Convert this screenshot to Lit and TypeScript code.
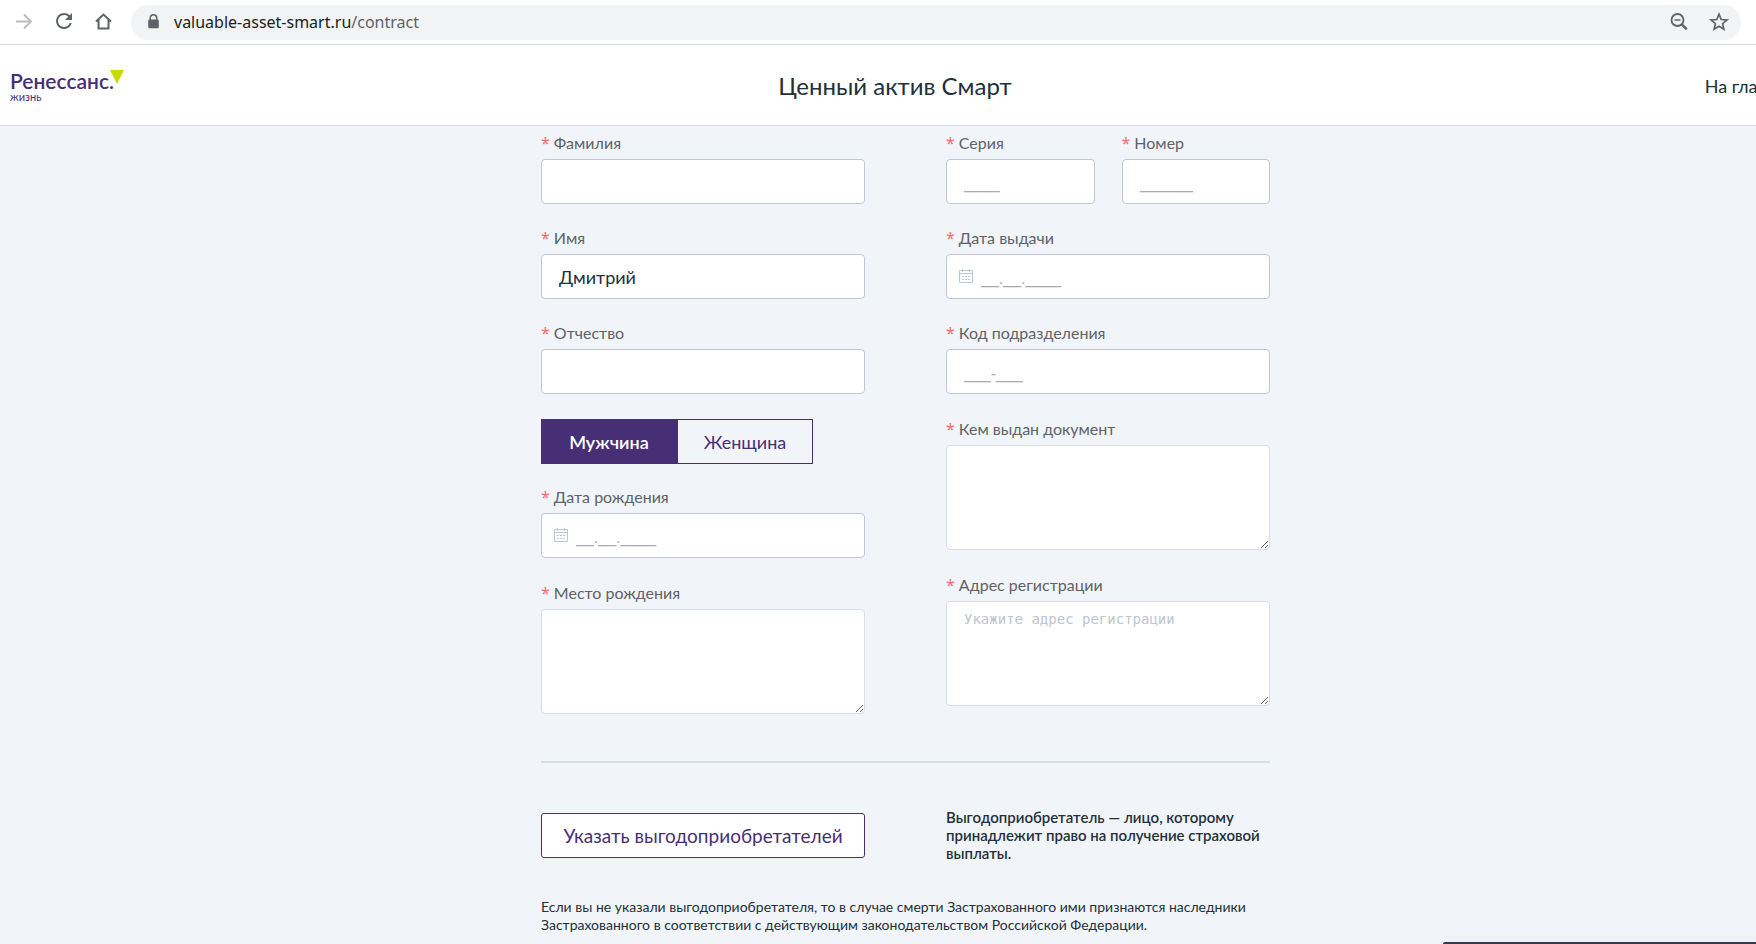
import { LitElement, html, css, svg, nothing } from "lit";
import { customElement, property, state } from "lit/decorators.js";
import { classMap } from "lit/directives/class-map.js";

const calendarIcon = svg`<g fill="none" stroke="#b9c9ce">
  <path d="M.5 1.500h13v12H.5zM.5 4.500h13M3.500 0v3M10.500 0v3"/>
  <path d="M3 7.500h8M3 10.500h8" stroke-dasharray="2 1"/></g>`;

@customElement("browser-bar")
export class BrowserBar extends LitElement {
  static styles = css`
    :host {
      display: flex;
      align-items: center;
      height: 44px;
      padding: 0 15px 0 12px;
      border-bottom: 1px solid #d9dce0;
      background: #fff;
      color: #5f6368;
      font-family: "Noto Sans", "Open Sans", sans-serif;
    }
    svg { display: block; }
    button {
      display: block;
      padding: 0;
      border: 0;
      background: none;
      color: inherit;
    }
    .tools { display: flex; gap: 16px; margin-right: 15px; }
    .off { color: #b9bbbe; }
    .address {
      flex: 1;
      display: flex;
      align-items: center;
      height: 35px;
      padding: 0 10px 0 11px;
      border-radius: 18px;
      background: #f1f3f4;
    }
    .url { flex: 1; margin-left: 8px; font-size: 16px; line-height: 24px; }
    .host { color: #202124; }
    .actions { display: flex; gap: 16px; }
  `;

  render() {
    return html`
      <div class="tools">
        <button class="off" aria-label="Вперёд" disabled>
          <svg width="24" height="24" viewBox="0 0 24 24" fill="none" stroke="currentColor" stroke-width="1.800"><path d="M4 11.500h15M12 4.500l7 7-7 7"/></svg>
        </button>
        <button aria-label="Обновить">
          <svg width="24" height="24" viewBox="0 0 24 24" fill="currentColor"><path d="M17.650 5.350A7.960 7.960 0 0 0 12 3a8 8 0 1 0 7.730 10h-2.080A6 6 0 1 1 12 5c1.660 0 3.140.690 4.220 1.780L13 10h7V3z"/></svg>
        </button>
        <button aria-label="Главная">
          <svg width="24" height="24" viewBox="0 0 24 24" fill="none" stroke="currentColor" stroke-width="2"><path d="M4 11.500L11.500 4.500l7.500 7M6.500 10v8.500h10V10"/></svg>
        </button>
      </div>
      <div class="address">
        <svg width="24" height="24" viewBox="0 0 24 24" fill="currentColor"><path d="M15.500 9.500V8a4 4 0 0 0-8 0v1.500A1.300 1.300 0 0 0 6.200 10.800v6.200a1.300 1.300 0 0 0 1.300 1.300h8a1.300 1.300 0 0 0 1.300-1.300v-6.200A1.300 1.300 0 0 0 15.500 9.500zM9 8a2.500 2.500 0 0 1 5 0v1.500H9z"/></svg>
        <span class="url"><span class="host">valuable-asset-smart.ru</span>/contract</span>
        <div class="actions">
          <button aria-label="Масштаб">
            <svg width="24" height="24" viewBox="0 0 24 24" fill="none" stroke="currentColor"><circle cx="10.500" cy="10" r="6" stroke-width="1.800"/><path d="M7.500 10h6" stroke-width="1.500"/><path d="M14.800 14.300l5 5" stroke-width="2.400"/></svg>
          </button>
          <button aria-label="Добавить в закладки">
            <svg width="24" height="24" viewBox="0 0 24 24" fill="none" stroke="currentColor" stroke-width="1.700"><path d="M12 4.200l2.200 5.300 5.800.500-4.400 3.700 1.300 5.600L12 16.300l-4.900 3 1.300-5.600L4 10l5.800-.500z"/></svg>
          </button>
        </div>
      </div>`;
  }
}

@customElement("form-field")
export class FormField extends LitElement {
  @property() label = "";
  @property() value = "";
  @property() placeholder = "";
  @property({ reflect: true }) kind: "text" | "date" | "area" = "text";

  static styles = css`
    :host { display: block; }
    :host([kind="area"]) { margin-top: 1px; }
    label {
      display: block;
      margin-bottom: 4px;
      color: #606266;
      font-size: 16px;
      line-height: 24px;
    }
    label::before {
      content: "*";
      margin-right: 4px;
      color: #f56c6c;
      font-family: "Noto Sans", sans-serif;
      line-height: 1;
    }
    .box { position: relative; }
    input,
    textarea {
      display: block;
      box-sizing: border-box;
      width: 100%;
      border: 1px solid #c0c6d4;
      border-radius: 4px;
      background: #fff;
      color: #233038;
      outline: none;
    }
    input {
      height: 45px;
      padding: 0 17px;
      font: 18px/24px Lato, "Noto Sans", sans-serif;
    }
    input::placeholder {
      color: #a9abb0;
      font: 16px/24px "Liberation Sans", sans-serif;
      opacity: 1;
    }
    .date { padding-left: 34px; }
    .icon { position: absolute; left: 13px; top: 15px; }
    textarea {
      height: 105px;
      padding: 8px 17px;
      border-color: #d9dde6;
      font: 14px/18px "DejaVu Sans Mono", monospace;
      resize: vertical;
    }
    textarea::placeholder { color: #c0c4cc; opacity: 1; }
  `;

  render() {
    return html`
      <label for="control">${this.label}</label>
      <div class="box">
        ${this.kind === "area"
          ? html`<textarea id="control" placeholder=${this.placeholder} .value=${this.value}></textarea>`
          : html`<input id="control" type="text" class=${classMap({ date: this.kind === "date" })}
              placeholder=${this.placeholder} .value=${this.value} />`}
        ${this.kind === "date"
          ? html`<svg class="icon" width="14" height="14" viewBox="0 0 14 14" aria-hidden="true">${calendarIcon}</svg>`
          : nothing}
      </div>`;
  }
}

@customElement("app-root")
export class AppRoot extends LitElement {
  @state() private male = true;

  static styles = css`
    :host {
      display: flex;
      flex-direction: column;
      height: 100vh;
      overflow: hidden;
      background: #f1f5fa;
      color: #233038;
      font-family: Lato, "Noto Sans", sans-serif;
    }
    browser-bar { flex: none; }
    .viewport { position: relative; flex: 1; overflow: hidden; }
    /* the site is slightly wider than the window and runs off to the right */
    .site { width: calc(100% + 55px); }
    header {
      display: grid;
      grid-template-columns: 1fr auto 1fr;
      align-items: center;
      box-sizing: border-box;
      height: 81px;
      padding: 2px 31px 0 10px;
      border-bottom: 1px solid #d8dbe6;
      background: #fff;
    }
    .logo {
      justify-self: start;
      display: grid;
      grid-template-columns: auto auto;
      color: #472f75;
      text-decoration: none;
    }
    .brand { font-size: 21px; font-weight: 600; line-height: 22px; }
    .mark { margin-left: -4px; }
    .sub { font-size: 11px; line-height: 10px; }
    h1 { margin: 0; font-size: 24px; font-weight: 400; line-height: 32px; }
    .home {
      justify-self: end;
      margin-right: -20px;
      color: inherit;
      font-size: 18px;
      line-height: 24px;
      text-decoration: none;
      white-space: nowrap;
    }
    main { max-width: 729px; margin: 0 auto; padding-top: 5px; }
    .columns {
      display: grid;
      grid-template-columns: 1fr 1fr;
      column-gap: 81px;
    }
    .stack { display: flex; flex-direction: column; gap: 22px; }
    .pair { display: grid; grid-template-columns: 1fr 1fr; column-gap: 27px; }
    .sex {
      display: grid;
      grid-template-columns: 1fr 1fr;
      width: 272px;
      height: 45px;
      margin: 3px 0 -1px;
    }
    .sex button {
      padding: 0;
      border: 1px solid #472f75;
      background: none;
      color: #472f75;
      font: 18px Lato, "Noto Sans", sans-serif;
    }
    .sex .on { background: #472f75; color: #fff; font-weight: 600; }
    hr { height: 2px; margin: 47px 0 45px; border: 0; background: #d8dce4; }
    .beneficiaries { align-items: center; }
    .specify {
      height: 45px;
      padding: 0;
      border: 1px solid #472f75;
      border-radius: 3px;
      background: #fff;
      color: #472f75;
      font: 19px Lato, "Noto Sans", sans-serif;
    }
    .note { margin: 0; font-size: 15px; font-weight: 600; line-height: 18px; }
    .legal { margin: 36px 0 0; font-size: 14px; line-height: 18px; }
    .drawer {
      position: absolute;
      left: 1443px;
      right: 0;
      bottom: 0;
      height: 2px;
      border-radius: 6px 0 0 0;
      background: #3b3556;
      box-shadow: 0 0 12px rgba(60, 70, 90, 0.15);
    }
  `;

  render() {
    return html`
      <browser-bar></browser-bar>
      <div class="viewport">
        <div class="site">
          <header>
            <a class="logo" href="#">
              <span class="brand">Ренессанс.</span>
              <svg class="mark" width="14" height="14" viewBox="0 0 14 14"><path d="M0 0h14L7 14z" fill="#c8d900"/></svg>
              <span class="sub">жизнь</span>
            </a>
            <h1>Ценный актив Смарт</h1>
            <a class="home" href="#">На главную</a>
          </header>
          <main>
            <div class="columns">
              <div class="stack">
                <form-field label="Фамилия"></form-field>
                <form-field label="Имя" value="Дмитрий"></form-field>
                <form-field label="Отчество"></form-field>
                <div class="sex" role="group" aria-label="Пол">
                  <button class=${classMap({ on: this.male })} aria-pressed=${this.male} @click=${() => (this.male = true)}>Мужчина</button>
                  <button class=${classMap({ on: !this.male })} aria-pressed=${!this.male} @click=${() => (this.male = false)}>Женщина</button>
                </div>
                <form-field kind="date" label="Дата рождения" placeholder="__.__.____"></form-field>
                <form-field kind="area" label="Место рождения"></form-field>
              </div>
              <div class="stack">
                <div class="pair">
                  <form-field label="Серия" placeholder="____"></form-field>
                  <form-field label="Номер" placeholder="______"></form-field>
                </div>
                <form-field kind="date" label="Дата выдачи" placeholder="__.__.____"></form-field>
                <form-field label="Код подразделения" placeholder="___-___"></form-field>
                <form-field kind="area" label="Кем выдан документ"></form-field>
                <form-field kind="area" label="Адрес регистрации" placeholder="Укажите адрес регистрации"></form-field>
              </div>
            </div>
            <hr />
            <div class="columns beneficiaries">
              <button class="specify">Указать выгодоприобретателей</button>
              <p class="note">Выгодоприобретатель — лицо, которому принадлежит право на получение страховой выплаты.</p>
            </div>
            <p class="legal">Если вы не указали выгодоприобретателя, то в случае смерти Застрахованного ими признаются наследники Застрахованного в соответствии с действующим законодательством Российской Федерации.</p>
          </main>
        </div>
        <div class="drawer"></div>
      </div>`;
  }
}
